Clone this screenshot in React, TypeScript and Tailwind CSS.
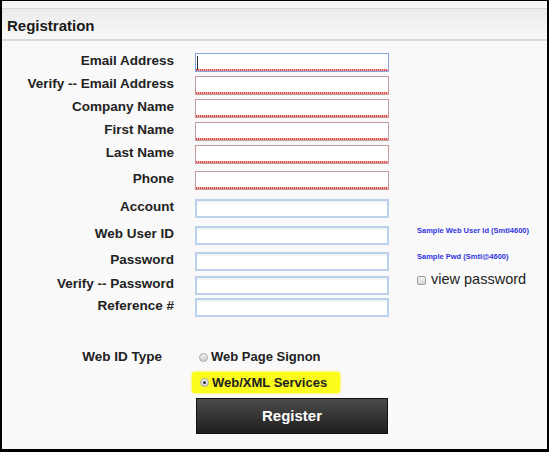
import React from 'react';

type Row = { label: string; kind: 'red' | 'focus' | 'blue'; gap: string; side?: 'uid' | 'pwd' | 'view' };

const ROWS: Row[] = [
  { label: 'Email Address', kind: 'focus', gap: 'mt-[12px]' },
  { label: 'Verify -- Email Address', kind: 'red', gap: 'mt-[4px]' },
  { label: 'Company Name', kind: 'red', gap: 'mt-[4px]' },
  { label: 'First Name', kind: 'red', gap: 'mt-[4px]' },
  { label: 'Last Name', kind: 'red', gap: 'mt-[4px]' },
  { label: 'Phone', kind: 'red', gap: 'mt-[7px]' },
  { label: 'Account', kind: 'blue', gap: 'mt-[9px]' },
  { label: 'Web User ID', kind: 'blue', gap: 'mt-[8px]', side: 'uid' },
  { label: 'Password', kind: 'blue', gap: 'mt-[7px]', side: 'pwd' },
  { label: 'Verify -- Password', kind: 'blue', gap: 'mt-[5px]', side: 'view' },
  { label: 'Reference #', kind: 'blue', gap: 'mt-[3px]' },
];

const squiggle =
  'bg-[repeating-linear-gradient(90deg,#e04848_0_1px,#f7b0b0_1px_2px)] bg-[length:100%_2px] bg-bottom bg-no-repeat';

function Field({ kind }: { kind: Row['kind'] }) {
  if (kind === 'blue') {
    return (
      <div className="h-[19px] w-[194px] border-2 border-[#bcd2ea] bg-white shadow-[inset_0_2px_2px_#eef3f8]" />
    );
  }
  if (kind === 'focus') {
    return (
      <div className={`flex h-[19px] w-[194px] items-center border border-[#8aa4dc] bg-white pl-[1px] ${squiggle}`}>
        <div className="h-[14px] w-[1px] bg-[#333]" />
      </div>
    );
  }
  return <div className={`h-[19px] w-[194px] border border-[#c59a9a] bg-white ${squiggle}`} />;
}

function Side({ side }: { side?: Row['side'] }) {
  if (side === 'uid') {
    return <span className="text-[7.5px] font-bold leading-[10px] text-[#3034e0]">Sample Web User Id (Smtl4600)</span>;
  }
  if (side === 'pwd') {
    return <span className="text-[7.5px] font-bold leading-[10px] text-[#3034e0]">Sample Pwd (Smtl@4600)</span>;
  }
  if (side === 'view') {
    return (
      <label className="-mt-[4px] flex h-[16px] items-center gap-[5px] text-[14.5px] text-[#222]">
        <span className="h-[9px] w-[9px] rounded-[2px] border border-[#9a9a9a] bg-gradient-to-b from-[#f4f4f4] to-[#d8d8d8]" />
        view password
      </label>
    );
  }
  return null;
}

function Radio({ checked }: { checked?: boolean }) {
  return (
    <span className="flex h-[9px] w-[9px] items-center justify-center rounded-full border border-[#a8a8a8] bg-gradient-to-b from-[#f2f2f2] to-[#d0d0d0]">
      {checked && <span className="h-[3px] w-[3px] rounded-full bg-[#333]" />}
    </span>
  );
}

export default function App() {
  return (
    <div className="h-[452px] w-[549px] overflow-hidden border-x-2 border-t border-b-[3px] border-black bg-[#f9f9f9] font-['Liberation_Sans',Arial,sans-serif] text-[#222]">
      <div className="bg-[#f5f5f5] pt-[7px]">
        <div className="flex h-[33px] items-center border-t border-b-2 border-t-[#d9d9d9] border-b-[#dadada] bg-gradient-to-b from-[#ebebeb] to-[#f8f8f8] pl-[5px] pt-[5px]">
          <h1 className="text-[15px] font-bold text-[#1a1a1a]">Registration</h1>
        </div>
      </div>

      <div className="flex flex-col">
        {ROWS.map((r) => (
          <div key={r.label} className={`flex h-[19px] items-stretch ${r.gap}`}>
            <div className="flex w-[172px] items-center justify-end pb-[3px] text-[13.5px] font-bold">{r.label}</div>
            <div className="ml-[21px]">
              <Field kind={r.kind} />
            </div>
            <div className="ml-[28px] flex items-start">
              <Side side={r.side} />
            </div>
          </div>
        ))}

        <div className="mt-[30px] flex h-[20px] items-center">
          <div className="w-[172px] pr-[12px] text-right text-[13.5px] font-bold">Web ID Type</div>
          <div className="ml-[25px] flex items-center gap-[3px] text-[13px] font-bold">
            <Radio />
            Web Page Signon
          </div>
        </div>

        <div className="mt-[5px] flex h-[21px] items-center">
          <div className="w-[172px]" />
          <div className="ml-[18px] flex h-[21px] w-[148px] items-center gap-[3px] rounded-[3px] bg-[#fbfb1c] pl-[8px] text-[13px] font-bold shadow-[0_0_3px_#f6f600]">
            <Radio checked />
            Web/XML Services
          </div>
        </div>

        <div className="mt-[5px] flex">
          <div className="w-[172px]" />
          <button className="ml-[22px] flex h-[36px] w-[192px] items-center justify-center border border-[#111] bg-gradient-to-b from-[#4c4c4c] to-[#1f1f1f] text-[15px] font-bold text-white">
            Register
          </button>
        </div>
      </div>
    </div>
  );
}
